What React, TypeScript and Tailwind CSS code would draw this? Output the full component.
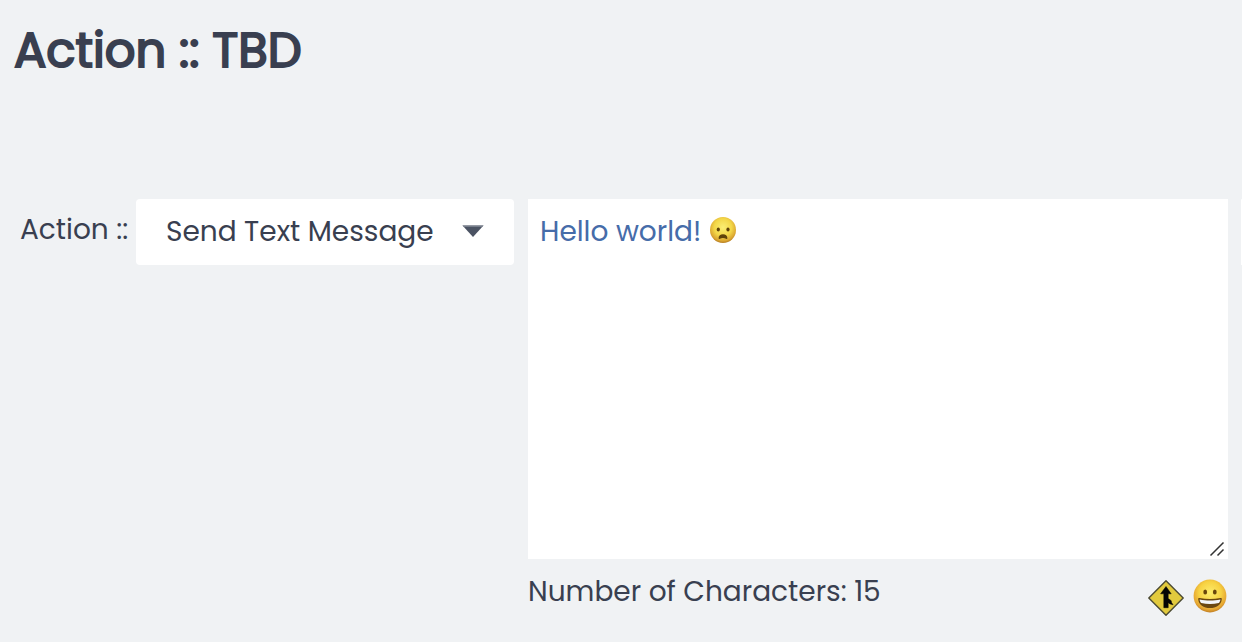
import { useState } from 'react'

const actions = ['Send Text Message', 'Send Email', 'Add Tag']

function FrowningFace({ className }: { className?: string }) {
  return (
    <svg viewBox="0 0 28 28" className={className} aria-hidden="true">
      <defs>
        <radialGradient id="frown" cx="0.5" cy="0.4" r="0.61">
          <stop offset="0" stopColor="#fbee74" />
          <stop offset="0.55" stopColor="#f3d748" />
          <stop offset="0.85" stopColor="#dba631" />
          <stop offset="1" stopColor="#b0771f" />
        </radialGradient>
      </defs>
      <circle cx="14" cy="14" r="13" fill="url(#frown)" />
      <ellipse cx="9.3" cy="13.6" rx="1.6" ry="2" fill="#5f4209" />
      <ellipse cx="19" cy="13.6" rx="1.6" ry="2" fill="#5f4209" />
      <path
        d="M9.6 22c0-2.500 1.800-3.800 4.400-3.800s4.400 1.300 4.400 3.800c0 .9-.6 1.100-1.300.7-1.900-.9-4.300-.9-6.200 0-.7.4-1.300.2-1.300-.7z"
        fill="#5f4209"
      />
    </svg>
  )
}

function GrinningFace() {
  return (
    <svg viewBox="0 0 34 34" className="size-[34px]" aria-hidden="true">
      <defs>
        <radialGradient id="grin" cx="0.5" cy="0.4" r="0.61">
          <stop offset="0" stopColor="#fdec6c" />
          <stop offset="0.55" stopColor="#f7d242" />
          <stop offset="0.85" stopColor="#e5a532" />
          <stop offset="1" stopColor="#bb7a22" />
        </radialGradient>
      </defs>
      <circle cx="17" cy="17" r="16.4" fill="url(#grin)" />
      <ellipse cx="12.2" cy="13" rx="1.9" ry="2.5" fill="#69460c" />
      <ellipse cx="21.8" cy="13" rx="1.9" ry="2.5" fill="#69460c" />
      <path
        d="M5.200 20.200c-.1-.9.500-1.300 1.400-1.100 3.400.7 6.800 1 10.400 1s7-.3 10.400-1c.9-.2 1.500.2 1.400 1.100-.5 5.400-5.400 8.900-11.800 8.900s-11.300-3.500-11.800-8.900z"
        fill="#6b4710"
      />
      <path
        d="M6.600 20.500c3.400.8 6.800 1.100 10.400 1.100s7-.3 10.400-1.100c-.2 1.600-.8 2.900-1.700 3.500-5.600 1.300-11.800 1.300-17.400 0-.9-.6-1.500-1.900-1.700-3.500z"
        fill="#f3f5f8"
      />
    </svg>
  )
}

function MergeSign() {
  return (
    <svg viewBox="0 0 36 36" className="size-9" aria-hidden="true">
      <path
        d="M18 .8 35.200 18 18 35.200.8 18z"
        fill="#e2ca3d"
        stroke="#4b4a32"
        strokeWidth="1.4"
        strokeLinejoin="round"
      />
      <path
        d="M18 6.500 23.200 13.800h-3v4.700l3 2.200.3 1.900 1.600 2.200-3-.9-1.900-1.200v5h-4.400V13.800h-3.200z"
        fill="#050505"
        stroke="#050505"
        strokeWidth="0.5"
        strokeLinejoin="round"
      />
    </svg>
  )
}

function ActionSelect() {
  return (
    <div className="relative w-[378px] shrink-0">
      <select
        id="action"
        className="h-[66px] w-full appearance-none rounded-sm bg-white pl-[30px] pr-16 outline-none"
      >
        {actions.map((action) => (
          <option key={action}>{action}</option>
        ))}
      </select>
      <svg
        viewBox="0 0 22 12"
        className="pointer-events-none absolute right-[30px] top-[26px] h-3 w-[22px]"
        aria-hidden="true"
      >
        <path d="M.5.500h21L11 12z" fill="#4b5363" />
        <path d="M.5.500h21l-1 1.200h-19z" fill="#858b97" />
      </svg>
    </div>
  )
}

function MessageBox() {
  const [message, setMessage] = useState('Hello world! ')
  // the emoji takes two characters
  const count = message.length + 2

  return (
    <div className="min-w-0 flex-1">
      <div className="relative">
        <textarea
          aria-label="Message"
          value={message}
          onChange={(e) => setMessage(e.target.value)}
          className="block h-[360px] w-full resize-none bg-white px-3 pt-[13px] pb-3 text-[#466ca9] outline-none"
        />
        <FrowningFace className="pointer-events-none absolute left-[181px] top-[17px] size-7" />
        <svg
          viewBox="0 0 16 16"
          className="pointer-events-none absolute right-[3px] bottom-[2px] size-4"
          aria-hidden="true"
        >
          <path d="M1.500 14.500 14.500 1.500M8.500 14.500l6-6" stroke="#333" strokeWidth="1.5" />
        </svg>
      </div>
      <div className="flex items-start justify-between pt-[13px]">
        <p>Number of Characters: {count}</p>
        <div className="flex items-start gap-[9px] pt-2 pr-px">
          <button type="button" aria-label="Insert merge field">
            <MergeSign />
          </button>
          <button type="button" aria-label="Insert emoji" className="-mt-px">
            <GrinningFace />
          </button>
        </div>
      </div>
    </div>
  )
}

export default function App() {
  return (
    <main className="min-h-screen overflow-hidden bg-[#f0f2f4] pt-4 font-[Poppins,Inter,sans-serif] text-[28px] leading-10 text-[#393f50]">
      <h1 className="pl-[14px] text-5xl leading-[70px] font-normal [-webkit-text-stroke:2px_#393f50]">
        Action :: TBD
      </h1>
      <div className="mt-[113px] flex items-start">
        <label htmlFor="action" className="w-[136px] shrink-0 pl-5 pt-[11px] whitespace-nowrap">
          Action ::
        </label>
        <ActionSelect />
        <div className="flex min-w-0 flex-1 pl-[14px]">
          <MessageBox />
          <div className="ml-[13px] h-[66px] w-px rounded-sm bg-white" />
        </div>
      </div>
    </main>
  )
}
